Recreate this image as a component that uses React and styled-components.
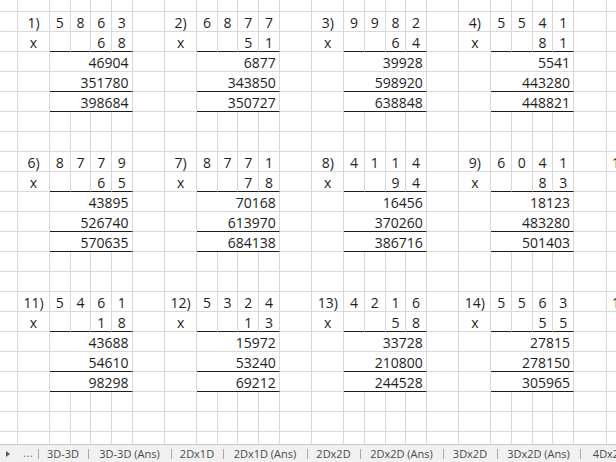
import React from 'react';
import styled, { createGlobalStyle } from 'styled-components';

const GlobalStyle = createGlobalStyle`
  html, body {
    margin: 0;
    padding: 0;
    background: #ffffff;
    overflow: hidden;
  }
`;

const LABEL_W = 32;
const DIGIT_W = 20.67;
const GAP_W = 32.5;
const BLOCKS_PER_ROW = 5;

const columns = [
  '18px',
  ...Array.from({ length: BLOCKS_PER_ROW }).flatMap(() => [
    `${LABEL_W}px`,
    ...Array(4).fill(`${DIGIT_W}px`),
    `${GAP_W}px`,
  ]),
].join(' ');

const problems = [
  [
    { n: '1)', top: '5863', mul: '68', p1: '46904', p2: '351780', sum: '398684' },
    { n: '2)', top: '6877', mul: '51', p1: '6877', p2: '343850', sum: '350727' },
    { n: '3)', top: '9982', mul: '64', p1: '39928', p2: '598920', sum: '638848' },
    { n: '4)', top: '5541', mul: '81', p1: '5541', p2: '443280', sum: '448821' },
    { n: '5)', top: '7325', mul: '47', p1: '51275', p2: '293000', sum: '344275' },
  ],
  [
    { n: '6)', top: '8779', mul: '65', p1: '43895', p2: '526740', sum: '570635' },
    { n: '7)', top: '8771', mul: '78', p1: '70168', p2: '613970', sum: '684138' },
    { n: '8)', top: '4114', mul: '94', p1: '16456', p2: '370260', sum: '386716' },
    { n: '9)', top: '6041', mul: '83', p1: '18123', p2: '483280', sum: '501403' },
    { n: '10)', top: '3912', mul: '26', p1: '23472', p2: '78240', sum: '101712' },
  ],
  [
    { n: '11)', top: '5461', mul: '18', p1: '43688', p2: '54610', sum: '98298' },
    { n: '12)', top: '5324', mul: '13', p1: '15972', p2: '53240', sum: '69212' },
    { n: '13)', top: '4216', mul: '58', p1: '33728', p2: '210800', sum: '244528' },
    { n: '14)', top: '5563', mul: '55', p1: '27815', p2: '278150', sum: '305965' },
    { n: '15)', top: '6218', mul: '39', p1: '55962', p2: '186540', sum: '242502' },
  ],
];

const tabs = [
  { name: '3D-3D', width: 50 },
  { name: '3D-3D (Ans)', width: 83 },
  { name: '2Dx1D', width: 52 },
  { name: '2Dx1D (Ans)', width: 84 },
  { name: '2Dx2D', width: 53 },
  { name: '2Dx2D (Ans)', width: 83 },
  { name: '3Dx2D', width: 54 },
  { name: '3Dx2D (Ans)', width: 83 },
  { name: '4Dx2D', width: 60 },
];

const Screen = styled.div`
  width: 616px;
  height: 462px;
  display: flex;
  flex-direction: column;
  overflow: hidden;
  font-family: "Open Sans", "Liberation Sans", sans-serif;
`;

const Sheet = styled.div`
  flex: 1;
  overflow: hidden;
  display: grid;
  grid-template-columns: ${columns};
  grid-template-rows: 12px repeat(22, 20px);
  justify-content: start;
  align-content: start;
`;

const Cell = styled.div`
  box-sizing: border-box;
  grid-column: span ${(p) => p.$span || 1};
  border-right: 1px solid #d9d9d9;
  border-bottom: 1px solid ${(p) => (p.$rule ? '#1c1c1c' : '#d9d9d9')};
  padding-top: 1px;
  padding-right: ${(p) => (p.$align === 'right' ? '3px' : '0')};
  font-size: 14px;
  line-height: 19px;
  color: #1e1e1e;
  text-align: ${(p) => p.$align || 'center'};
  white-space: nowrap;
  overflow: hidden;
`;

const TabBar = styled.div`
  flex: none;
  height: 18px;
  box-sizing: border-box;
  display: flex;
  align-items: center;
  background: #f1f1f1;
  border-top: 1px solid #c8c8c8;
  font-size: 11px;
  color: #4a4a4a;
  overflow: hidden;
`;

const Nav = styled.div`
  flex: none;
  width: 38px;
  height: 100%;
  display: flex;
  align-items: center;
  gap: 13px;
  padding-left: 6px;
  box-sizing: border-box;
`;

const Dots = styled.span`
  color: #6a6a6a;
  letter-spacing: 0.5px;
  line-height: 1;
  margin-top: -2px;
`;

const Tab = styled.div`
  flex: none;
  position: relative;
  width: ${(p) => p.$width}px;
  height: 100%;
  display: flex;
  align-items: center;
  justify-content: center;
  white-space: nowrap;

  &::before {
    content: '';
    position: absolute;
    left: 0;
    top: 4px;
    height: 10px;
    border-left: 1px solid #a8a8a8;
  }
`;

const blockRow = (p, r) => {
  const key = `${p.n}-${r}`;
  switch (r) {
    case 0:
      return [
        <Cell key={`${key}-l`}>{p.n}</Cell>,
        ...p.top.split('').map((d, i) => <Cell key={`${key}-d${i}`}>{d}</Cell>),
        <Cell key={`${key}-g`} />,
      ];
    case 1:
      return [
        <Cell key={`${key}-l`}>x</Cell>,
        <Cell key={`${key}-d0`} $rule />,
        <Cell key={`${key}-d1`} $rule />,
        ...p.mul.split('').map((d, i) => (
          <Cell key={`${key}-m${i}`} $rule>{d}</Cell>
        )),
        <Cell key={`${key}-g`} />,
      ];
    case 2:
    case 3:
    case 4: {
      const value = [p.p1, p.p2, p.sum][r - 2];
      return [
        <Cell key={`${key}-l`} />,
        <Cell key={`${key}-v`} $span={4} $align="right" $rule={r > 2}>
          {value}
        </Cell>,
        <Cell key={`${key}-g`} />,
      ];
    }
    default:
      return Array.from({ length: 6 }).map((_, i) => <Cell key={`${key}-e${i}`} />);
  }
};

const emptyRow = (key) =>
  Array.from({ length: 1 + BLOCKS_PER_ROW * 6 }).map((_, i) => <Cell key={`${key}-${i}`} />);

const App = () => {
  const cells = [...emptyRow('top')];

  problems.forEach((row, bi) => {
    for (let r = 0; r < 7; r += 1) {
      cells.push(<Cell key={`lead-${bi}-${r}`} />);
      row.forEach((p) => cells.push(...blockRow(p, r)));
    }
  });
  cells.push(...emptyRow('bottom'));

  return (
    <Screen>
      <GlobalStyle />
      <Sheet>{cells}</Sheet>
      <TabBar>
        <Nav>
          <svg width="4" height="6" viewBox="0 0 4 6">
            <polygon points="0,0 4,3 0,6" fill="#4d5b50" />
          </svg>
          <Dots>...</Dots>
        </Nav>
        {tabs.map((t) => (
          <Tab key={t.name} $width={t.width}>
            {t.name}
          </Tab>
        ))}
      </TabBar>
    </Screen>
  );
};

export default App;
